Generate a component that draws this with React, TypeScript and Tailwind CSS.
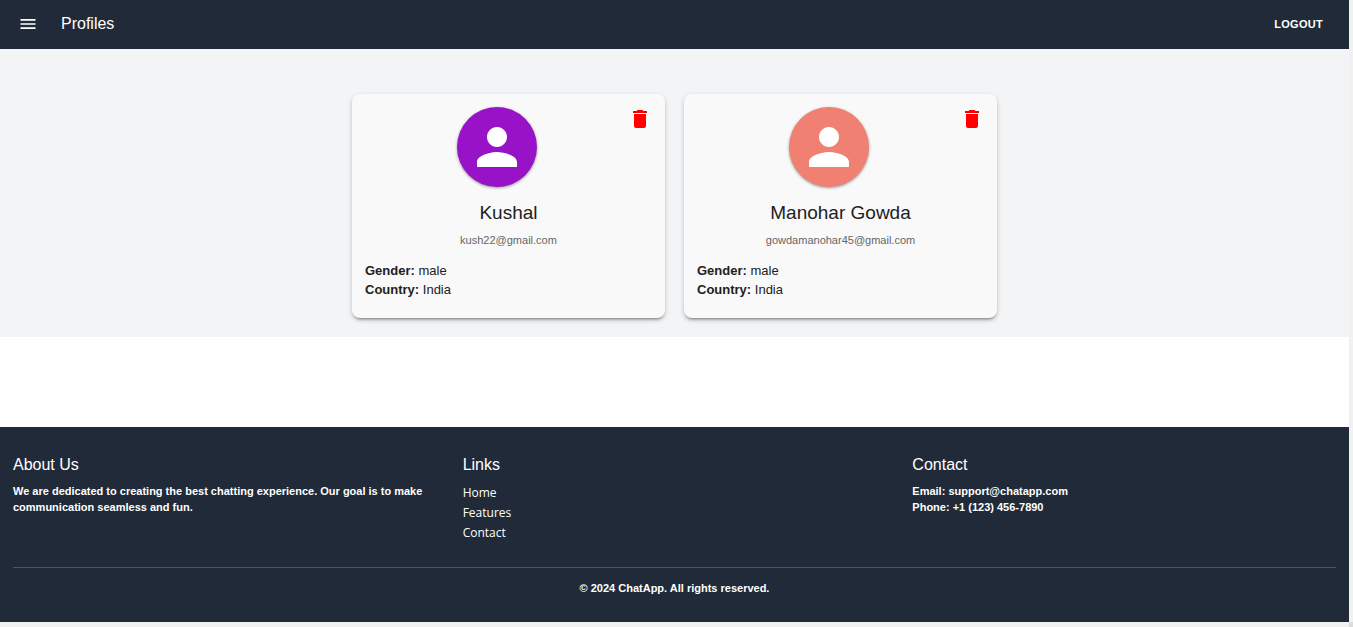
type Profile = {
  name: string;
  email: string;
  gender: string;
  country: string;
  avatarClass: string;
};

const profiles: Profile[] = [
  { name: "Kushal", email: "kush22@gmail.com", gender: "male", country: "India", avatarClass: "bg-[#9813c8]" },
  { name: "Manohar Gowda", email: "gowdamanohar45@gmail.com", gender: "male", country: "India", avatarClass: "bg-[#f08072]" },
];

const links = ["Home", "Features", "Contact"];

function MenuIcon() {
  return (
    <svg viewBox="0 0 24 24" className="size-5 fill-current" aria-hidden="true">
      <path d="M3 18h18v-2H3zm0-5h18v-2H3zm0-7v2h18V6z" />
    </svg>
  );
}

function PersonIcon() {
  return (
    <svg viewBox="0 0 24 24" className="size-[60px] fill-white" aria-hidden="true">
      <path d="M12 12c2.21 0 4-1.79 4-4s-1.79-4-4-4-4 1.79-4 4 1.79 4 4 4m0 2c-2.67 0-8 1.34-8 4v2h16v-2c0-2.66-5.33-4-8-4" />
    </svg>
  );
}

function DeleteIcon() {
  return (
    <svg viewBox="0 0 24 24" className="size-6 fill-current" aria-hidden="true">
      <path d="M6 19c0 1.1.9 2 2 2h8c1.1 0 2-.9 2-2V7H6zM19 4h-3.500l-1-1h-5l-1 1H5v2h14z" />
    </svg>
  );
}

function ProfileCard({ profile }: { profile: Profile }) {
  return (
    <article className="rounded-lg bg-[#f9f9f9] p-[13px] text-[#212121] shadow-[0_3px_3px_-2px_rgba(0,0,0,0.4),0_2px_5px_rgba(0,0,0,0.2)]">
      <div className="flex items-start">
        <div className="flex flex-1 justify-center">
          <div
            className={`flex size-20 items-center justify-center rounded-full shadow-[0_1px_3px_rgba(0,0,0,0.4)] ${profile.avatarClass}`}
          >
            <PersonIcon />
          </div>
        </div>
        <button type="button" aria-label={`Delete ${profile.name}`} className="text-[#ff0000]">
          <DeleteIcon />
        </button>
      </div>
      <h2 className="mt-3 text-center text-[19px] leading-7">{profile.name}</h2>
      <p className="mt-[5px] text-center text-[11px] leading-4 text-[#666666]">{profile.email}</p>
      <div className="mt-[13px] mb-[6px] text-[13px] leading-[19px]">
        <p>
          <b>Gender:</b> {profile.gender}
        </p>
        <p>
          <b>Country:</b> {profile.country}
        </p>
      </div>
    </article>
  );
}

export default function App() {
  return (
    <div className="min-h-screen bg-[#f1f1f1] pr-1 font-['Liberation_Sans',Arial,sans-serif]">
      <header className="flex items-center justify-between bg-[#212a38] pt-[11px] pr-[26px] pb-[13px] pl-[18px] text-white">
        <div className="flex items-center gap-[23px]">
          <button type="button" aria-label="Open menu">
            <MenuIcon />
          </button>
          <h1 className="text-base leading-[25px]">Profiles</h1>
        </div>
        <button type="button" className="text-[11px] leading-5 font-bold tracking-wide uppercase">
          Logout
        </button>
      </header>

      <main className="bg-white pb-[90px]">
        <section className="flex flex-wrap justify-center gap-[19px] bg-[#f3f4f6] px-4 pt-[45px] pb-[19px]">
          {profiles.map((profile) => (
            <div key={profile.email} className="w-[313px]">
              <ProfileCard profile={profile} />
            </div>
          ))}
        </section>
      </main>

      <footer className="bg-[#212a38] px-[13px] pt-[25px] pb-[26px] text-white">
        <div className="grid grid-cols-3 gap-[26px]">
          <section>
            <h2 className="text-base leading-[25px]">About Us</h2>
            <p className="mt-[6px] text-[11px] leading-4 font-bold">
              We are dedicated to creating the best chatting experience. Our goal is to make communication seamless
              and fun.
            </p>
          </section>
          <section>
            <h2 className="text-base leading-[25px]">Links</h2>
            <ul className="mt-[6px] font-['Open_Sans','Noto_Sans',sans-serif] text-xs leading-5">
              {links.map((link) => (
                <li key={link}>
                  <a href="#">{link}</a>
                </li>
              ))}
            </ul>
          </section>
          <section>
            <h2 className="text-base leading-[25px]">Contact</h2>
            <p className="mt-[6px] text-[11px] leading-4 font-bold">Email: support@chatapp.com</p>
            <p className="text-[11px] leading-4 font-bold">Phone: +1 (123) 456-7890</p>
          </section>
        </div>
        <p className="mt-6 border-t border-[#4b5563] pt-3 text-center text-[11px] leading-4 font-bold">
          © 2024 ChatApp. All rights reserved.
        </p>
      </footer>

      <div className="ml-auto -mr-1 h-[5px] w-1 bg-[#dcdcdc]" />
    </div>
  );
}
